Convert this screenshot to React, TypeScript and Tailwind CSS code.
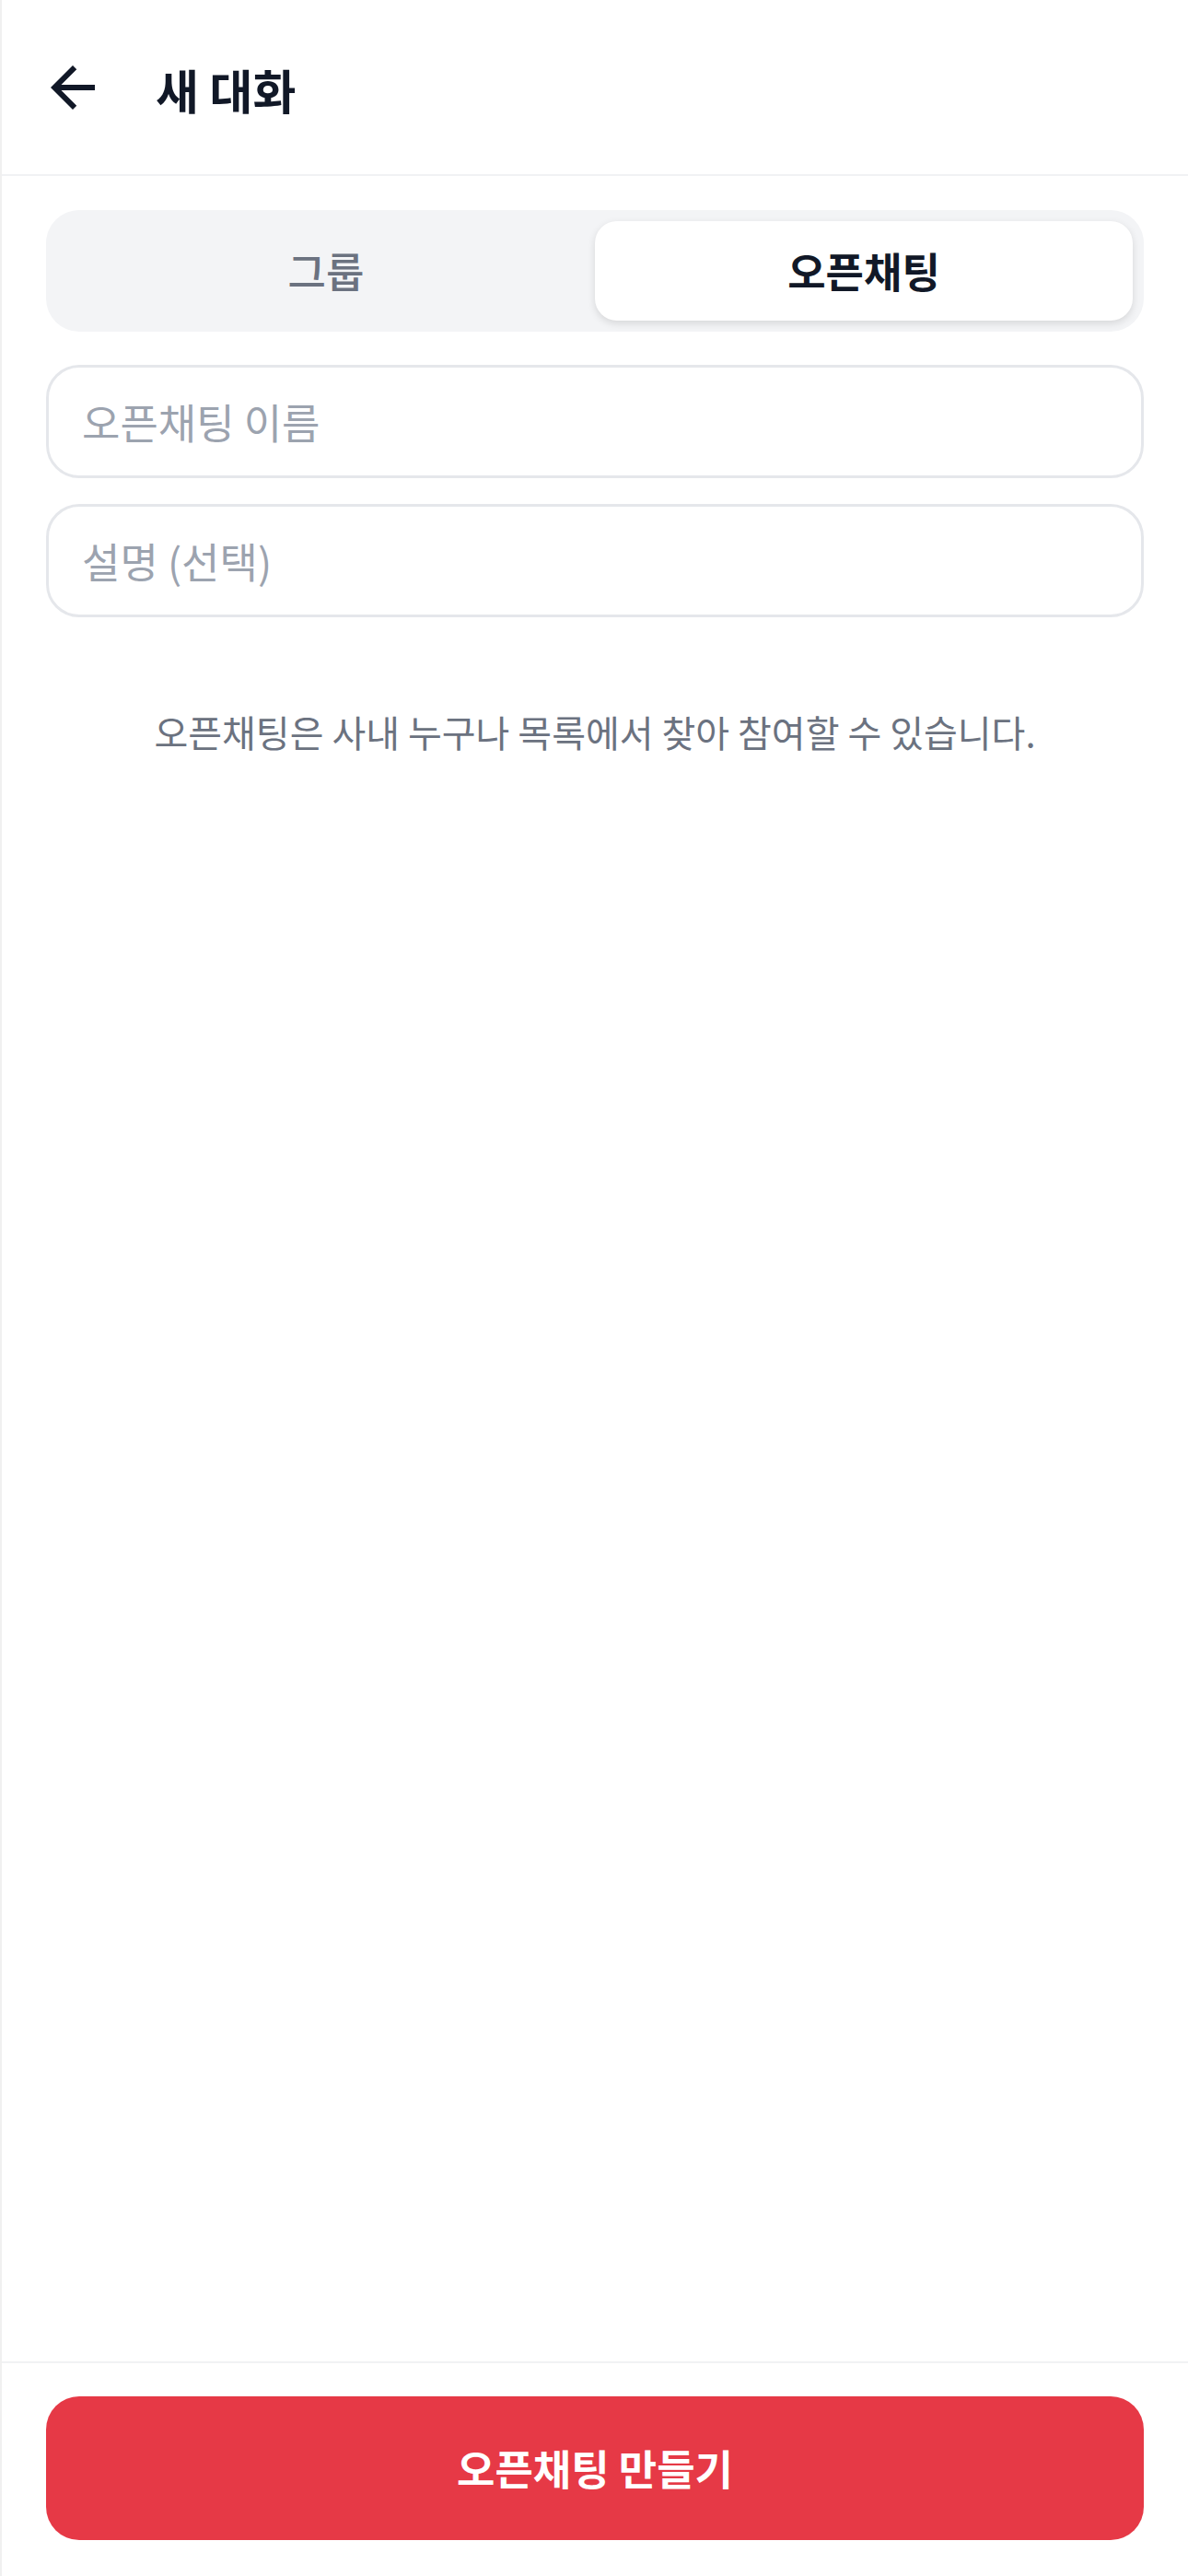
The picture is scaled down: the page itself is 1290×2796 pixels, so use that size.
import React, { useState } from 'react'

function BackArrow() {
    return (
        <svg width="72" height="72" viewBox="0 0 24 24" fill="#111827" aria-hidden="true">
            <path d="M20 11H7.83l5.59-5.59L12 4l-8 8 8 8 1.41-1.41L7.83 13H20v-2z" />
        </svg>
    )
}

function App() {
    const [tab, setTab] = useState<'group' | 'open'>('open')
    const [name, setName] = useState('')
    const [desc, setDesc] = useState('')

    return (
        <div className="w-full h-[2796px] flex flex-col bg-white border-l-2 border-[#f0f0f0] font-['Noto_Sans_CJK_KR','Noto_Sans',sans-serif]">
            {/* header */}
            <div className="h-[191px] shrink-0 flex items-center pl-[41px] border-b-2 border-[#f1f2f4]">
                <button type="button" className="w-[72px] h-[72px] flex items-center justify-center">
                    <BackArrow />
                </button>
                <h1 className="ml-[54px] mt-[6px] text-[51px] font-bold text-[#111827] leading-none">새 대화</h1>
            </div>

            <div className="flex-1 px-[48px] pt-[37px]">
                {/* tabs */}
                <div className="h-[132px] p-[12px] bg-[#f3f4f6] rounded-[36px] grid grid-cols-2">
                    <button
                        type="button"
                        onClick={() => setTab('group')}
                        className={tab === 'group'
                            ? "rounded-[24px] bg-white shadow-[0_3px_9px_rgba(0,0,0,0.12)] text-[45px] font-bold text-[#111827]"
                            : "rounded-[24px] text-[45px] font-medium text-[#6b7280]"}
                    >
                        그룹
                    </button>
                    <button
                        type="button"
                        onClick={() => setTab('open')}
                        className={tab === 'open'
                            ? "rounded-[24px] bg-white shadow-[0_3px_9px_rgba(0,0,0,0.12)] text-[45px] font-bold text-[#111827]"
                            : "rounded-[24px] text-[45px] font-medium text-[#6b7280]"}
                    >
                        오픈채팅
                    </button>
                </div>

                {/* form */}
                <input
                    value={name}
                    onChange={(e) => setName(e.target.value)}
                    placeholder="오픈채팅 이름"
                    className="mt-[36px] block w-full h-[123px] px-[36px] border-[3px] border-[#e5e7eb] rounded-[36px] text-[45px] text-[#111827] placeholder:text-[#9ca3af] outline-none"
                />
                <input
                    value={desc}
                    onChange={(e) => setDesc(e.target.value)}
                    placeholder="설명 (선택)"
                    className="mt-[28px] block w-full h-[123px] px-[36px] border-[3px] border-[#e5e7eb] rounded-[36px] text-[45px] text-[#111827] placeholder:text-[#9ca3af] outline-none"
                />

                <p className="mt-[94px] text-center text-[40px] leading-[60px] text-[#6b7280]">
                    오픈채팅은 사내 누구나 목록에서 찾아 참여할 수 있습니다.
                </p>
            </div>

            {/* footer */}
            <div className="shrink-0 border-t-2 border-[#f1f2f4] px-[48px] pt-[36px] pb-[39px]">
                <button type="button" className="w-full h-[156px] rounded-[36px] bg-[#e63946] text-white text-[45px] font-bold">
                    오픈채팅 만들기
                </button>
            </div>
        </div>
    )
}

export default App
